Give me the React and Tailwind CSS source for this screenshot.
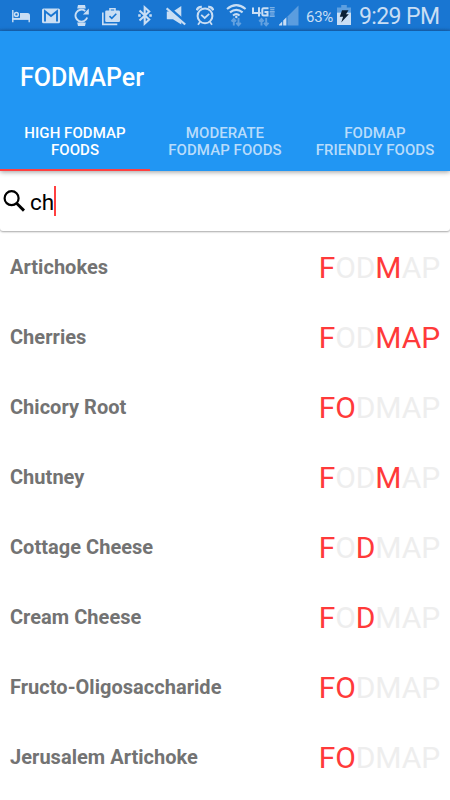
const tabs = [
    { lines: ["HIGH FODMAP", "FOODS"], active: true },
    { lines: ["MODERATE", "FODMAP FOODS"], active: false },
    { lines: ["FODMAP", "FRIENDLY FOODS"], active: false },
]

// flags marks which letters of FODMAP are high in each food
const foods = [
    { name: "Artichokes", flags: "100100" },
    { name: "Cherries", flags: "100111" },
    { name: "Chicory Root", flags: "110000" },
    { name: "Chutney", flags: "100100" },
    { name: "Cottage Cheese", flags: "101000" },
    { name: "Cream Cheese", flags: "101000" },
    { name: "Fructo-Oligosaccharide", flags: "110000" },
    { name: "Jerusalem Artichoke", flags: "110000" },
]

const BedIcon = () => (
    <svg className="w-[18px] h-[30px] shrink-0" viewBox="0 0 18 30" fill="none" stroke="currentColor">
        <path d="M.8 10v12.2" strokeWidth="1.4" />
        <path d="M0 18.9h18" strokeWidth="2" />
        <path d="M17.2 18v4.2" strokeWidth="1.4" />
        <circle cx="4.4" cy="14.4" r="1.9" strokeWidth="1.5" />
        <path d="M8 18v-5h7.5q2.5 0 2.5 2.5V18z" fill="currentColor" stroke="none" />
    </svg>
)

const MailIcon = () => (
    <svg className="w-[18px] h-[30px] shrink-0" viewBox="0 0 18 30">
        <rect y="8.5" width="18" height="14.8" rx="1.5" fill="currentColor" />
        <path d="M3 21.5v-10.3L9 16l6-4.8v10.3" fill="none" stroke="#1976d2" strokeWidth="1.9" />
    </svg>
)

const WatchIcon = () => (
    <svg className="w-4 h-[30px] shrink-0" viewBox="0 0 16 30" fill="none" stroke="currentColor">
        <path d="M3.2 8.6L4 5h7l.8 3.6zM3.2 22.4L4 26h7l.8-3.6z" fill="currentColor" stroke="none" />
        <path d="M11.2 10.9A6 6 0 1 0 13.2 17.5" strokeWidth="1.9" />
        <path d="M14.8 8.6v6H8.9z" fill="currentColor" stroke="none" />
    </svg>
)

const WorkIcon = () => (
    <svg className="w-[18px] h-[30px] shrink-0" viewBox="0 0 18 30" fill="none" stroke="currentColor">
        <path d="M.8 12.5v11.8h14.5" strokeWidth="1.7" />
        <path d="M8 11V8.8h5V11" strokeWidth="1.6" />
        <rect x="3.2" y="10.5" width="14.8" height="11.5" rx="1.2" fill="currentColor" stroke="none" />
        <path d="M7.5 16.1l2.3 2.3 4.5-4.6" stroke="#1976d2" strokeWidth="1.6" />
    </svg>
)

const BluetoothIcon = () => (
    <svg className="w-[14px] h-[30px] shrink-0" viewBox="0 0 14 30" fill="none" stroke="currentColor" strokeWidth="2.1">
        <path d="M1.5 10.6l9.7 8.9-4.5 4.2V7.3l4.5 4.2-9.7 8.9" />
        <path d="M.2 14.3h2.5v2.4H.2zM11.3 14.3h2.5v2.4h-2.5z" fill="currentColor" stroke="none" />
    </svg>
)

const MuteIcon = () => (
    <svg className="w-5 h-[30px] shrink-0" viewBox="0 0 20 30">
        <path d="M.8 11.5H7L15.3 6v18.5L7 19.3H.8z" fill="currentColor" />
        <path d="M1.6 7.2L19.6 22.9" stroke="#1976d2" strokeWidth="3.8" />
        <path d="M.6 8.4L19.2 24.5" stroke="currentColor" strokeWidth="2.2" />
    </svg>
)

const AlarmIcon = () => (
    <svg className="w-[18px] h-[30px] shrink-0" viewBox="0 0 18 30" fill="none" stroke="currentColor">
        <circle cx="9" cy="15.9" r="7.4" strokeWidth="2" />
        <path d="M.7 10.3A5 5 0 0 1 5.8 6.8M17.3 10.3a5 5 0 0 0-5.1-3.5" strokeWidth="2.3" />
        <path d="M5.2 14.8l3.5 3.2 4.5-4.2M4 22l-2 2.7M14 22l2 2.7" strokeWidth="1.8" />
    </svg>
)

const WifiIcon = () => (
    <svg className="w-[22px] h-[30px] shrink-0" viewBox="0 0 22 30" fill="none" stroke="currentColor" strokeWidth="2.1">
        <path d="M1 9q9.3-7.6 18.6 0M4 12.4q6.3-5.2 12.6 0M7 15.5q3.3-2.6 6.6 0" />
        <circle cx="10.3" cy="17" r="1.2" fill="currentColor" stroke="none" />
        <g strokeWidth="1.9" opacity=".42">
            <path d="M7.8 25.5V19M5.5 21.5L7.8 19l2.2 2.4M12.5 18V25M10.3 22.8l2.2 2.5 2.3-2.5" />
        </g>
    </svg>
)

const FourGIcon = () => (
    <svg className="w-[23px] h-[30px] shrink-0" viewBox="0 0 23 30" fill="none" stroke="currentColor" strokeWidth="2">
        <path d="M1 7.5v5.6h7.7M7 7.2v9.4M16.5 8.2h-4.8q-1.4 0-1.4 1.4v4.6q0 1.4 1.4 1.4h3.8v-3.6h-3" />
        <path d="M17.7 7.7h5M18.2 9.8h4.2M17.7 11.9h5M18.2 14h4.2M17.7 16.1h5" strokeWidth="1.1" opacity=".75" />
        <g strokeWidth="1.9" opacity=".42">
            <path d="M9.5 25.5V19M7.2 21.5L9.5 19l2.2 2.4M14.2 18V25M12 22.8l2.2 2.5 2.3-2.5" />
        </g>
    </svg>
)

const SignalIcon = () => (
    <svg className="w-[20px] h-[30px] shrink-0" viewBox="0 0 20 30" fill="currentColor">
        <path d="M19.5 5.5v20H8.5v-9z" opacity=".38" />
        <path d="M0 25.5v-.8l3.2-3.2v4zM4.2 25.5v-5l3.2-3.2v8.2z" />
    </svg>
)

const BatteryIcon = () => (
    <svg className="w-[14px] h-[30px] shrink-0" viewBox="0 0 14 30">
        <path d="M4.2 5h5.6v2.5H14v5H0v-5h4.2z" fill="#5d9fe0" />
        <path d="M0 12.5h14V25H0z" fill="currentColor" />
        <path d="M5 10.2h6.5L9 14.3h2.8L4.2 22.5l1.9-5.7H2.8z" fill="#0b2036" />
    </svg>
)

const StatusBar = () => (
    <div className="h-[31px] flex pl-3 bg-linear-to-b from-[#1976d2] from-90% to-[#1769bb] text-[#c9def4]">
        <BedIcon />
        <div className="ml-3"><MailIcon /></div>
        <div className="ml-[14px]"><WatchIcon /></div>
        <div className="ml-3"><WorkIcon /></div>
        <div className="ml-[18px]"><BluetoothIcon /></div>
        <div className="ml-[14px]"><MuteIcon /></div>
        <div className="ml-[10px]"><AlarmIcon /></div>
        <div className="ml-3"><WifiIcon /></div>
        <div className="ml-1"><FourGIcon /></div>
        <div className="ml-1"><SignalIcon /></div>
        <span className="ml-[7px] w-[31px] pt-[2px] text-[15px] leading-[30px] tracking-[-0.3px]">63%</span>
        <BatteryIcon />
        <span className="ml-2 pt-[2px] text-[23px] leading-[30px] tracking-[-0.6px] whitespace-nowrap">9:29 PM</span>
    </div>
)

const Tab = ({ tab }) => (
    <div className={`flex-1 h-[61px] pt-[15px] text-center text-[15px] leading-[17px] font-medium tracking-[0.06px] border-b-2 ${tab.active ? "text-white border-[#ff4040]" : "text-[#b8dcfb] border-[#2196f3]"}`}>
        {tab.lines.map((line) => (
            <div key={line} className="whitespace-nowrap">{line}</div>
        ))}
    </div>
)

const FoodRow = ({ food }) => (
    <div className="h-[70px] px-[10px] flex items-center justify-between">
        <span className="text-xl font-bold tracking-[0.03px] text-[#737373]">{food.name}</span>
        <span className="text-[30px] tracking-[-0.1px]">
            {"FODMAP".split("").map((letter, index) => (
                <span key={index} className={food.flags[index] === "1" ? "text-[#ff3a3a]" : "text-[#eeeeee]"}>
                    {letter}
                </span>
            ))}
        </span>
    </div>
)

const App = () => {

    return (
        <div className="w-[450px] h-[800px] overflow-hidden bg-white font-[Roboto,sans-serif]">

            <StatusBar />

            <header className="relative h-[140px] bg-[#2196f3] shadow-[0_1px_5px_rgba(0,0,0,0.4)]">
                <h1 className="h-[79px] pl-5 pt-[31px] text-[25px] leading-[32px] font-medium text-white">FODMAPer</h1>
                <div className="flex">
                    {tabs.map((tab) => (
                        <Tab key={tab.lines.join(" ")} tab={tab} />
                    ))}
                </div>
            </header>

            <div className="h-[60px] mb-px pl-[3px] flex items-center rounded-b-[3px] bg-white shadow-[0_1px_2px_rgba(0,0,0,0.35)]">
                <svg className="w-[23px] h-[23px]" viewBox="0 0 23 23" fill="none" stroke="#000" strokeWidth="2.2">
                    <circle cx="8.6" cy="8.2" r="7" />
                    <path d="M13.6 13.2l7.4 7.4" strokeWidth="2.9" />
                </svg>
                <span className="ml-[4px] pt-px text-[22.5px] leading-[30px] text-black">ch</span>
                <span className="w-[2px] h-[30px] bg-[#ff4040]"></span>
            </div>

            <main>
                {foods.map((food) => (
                    <FoodRow key={food.name} food={food} />
                ))}
            </main>

        </div>
    )

}

export default App;
